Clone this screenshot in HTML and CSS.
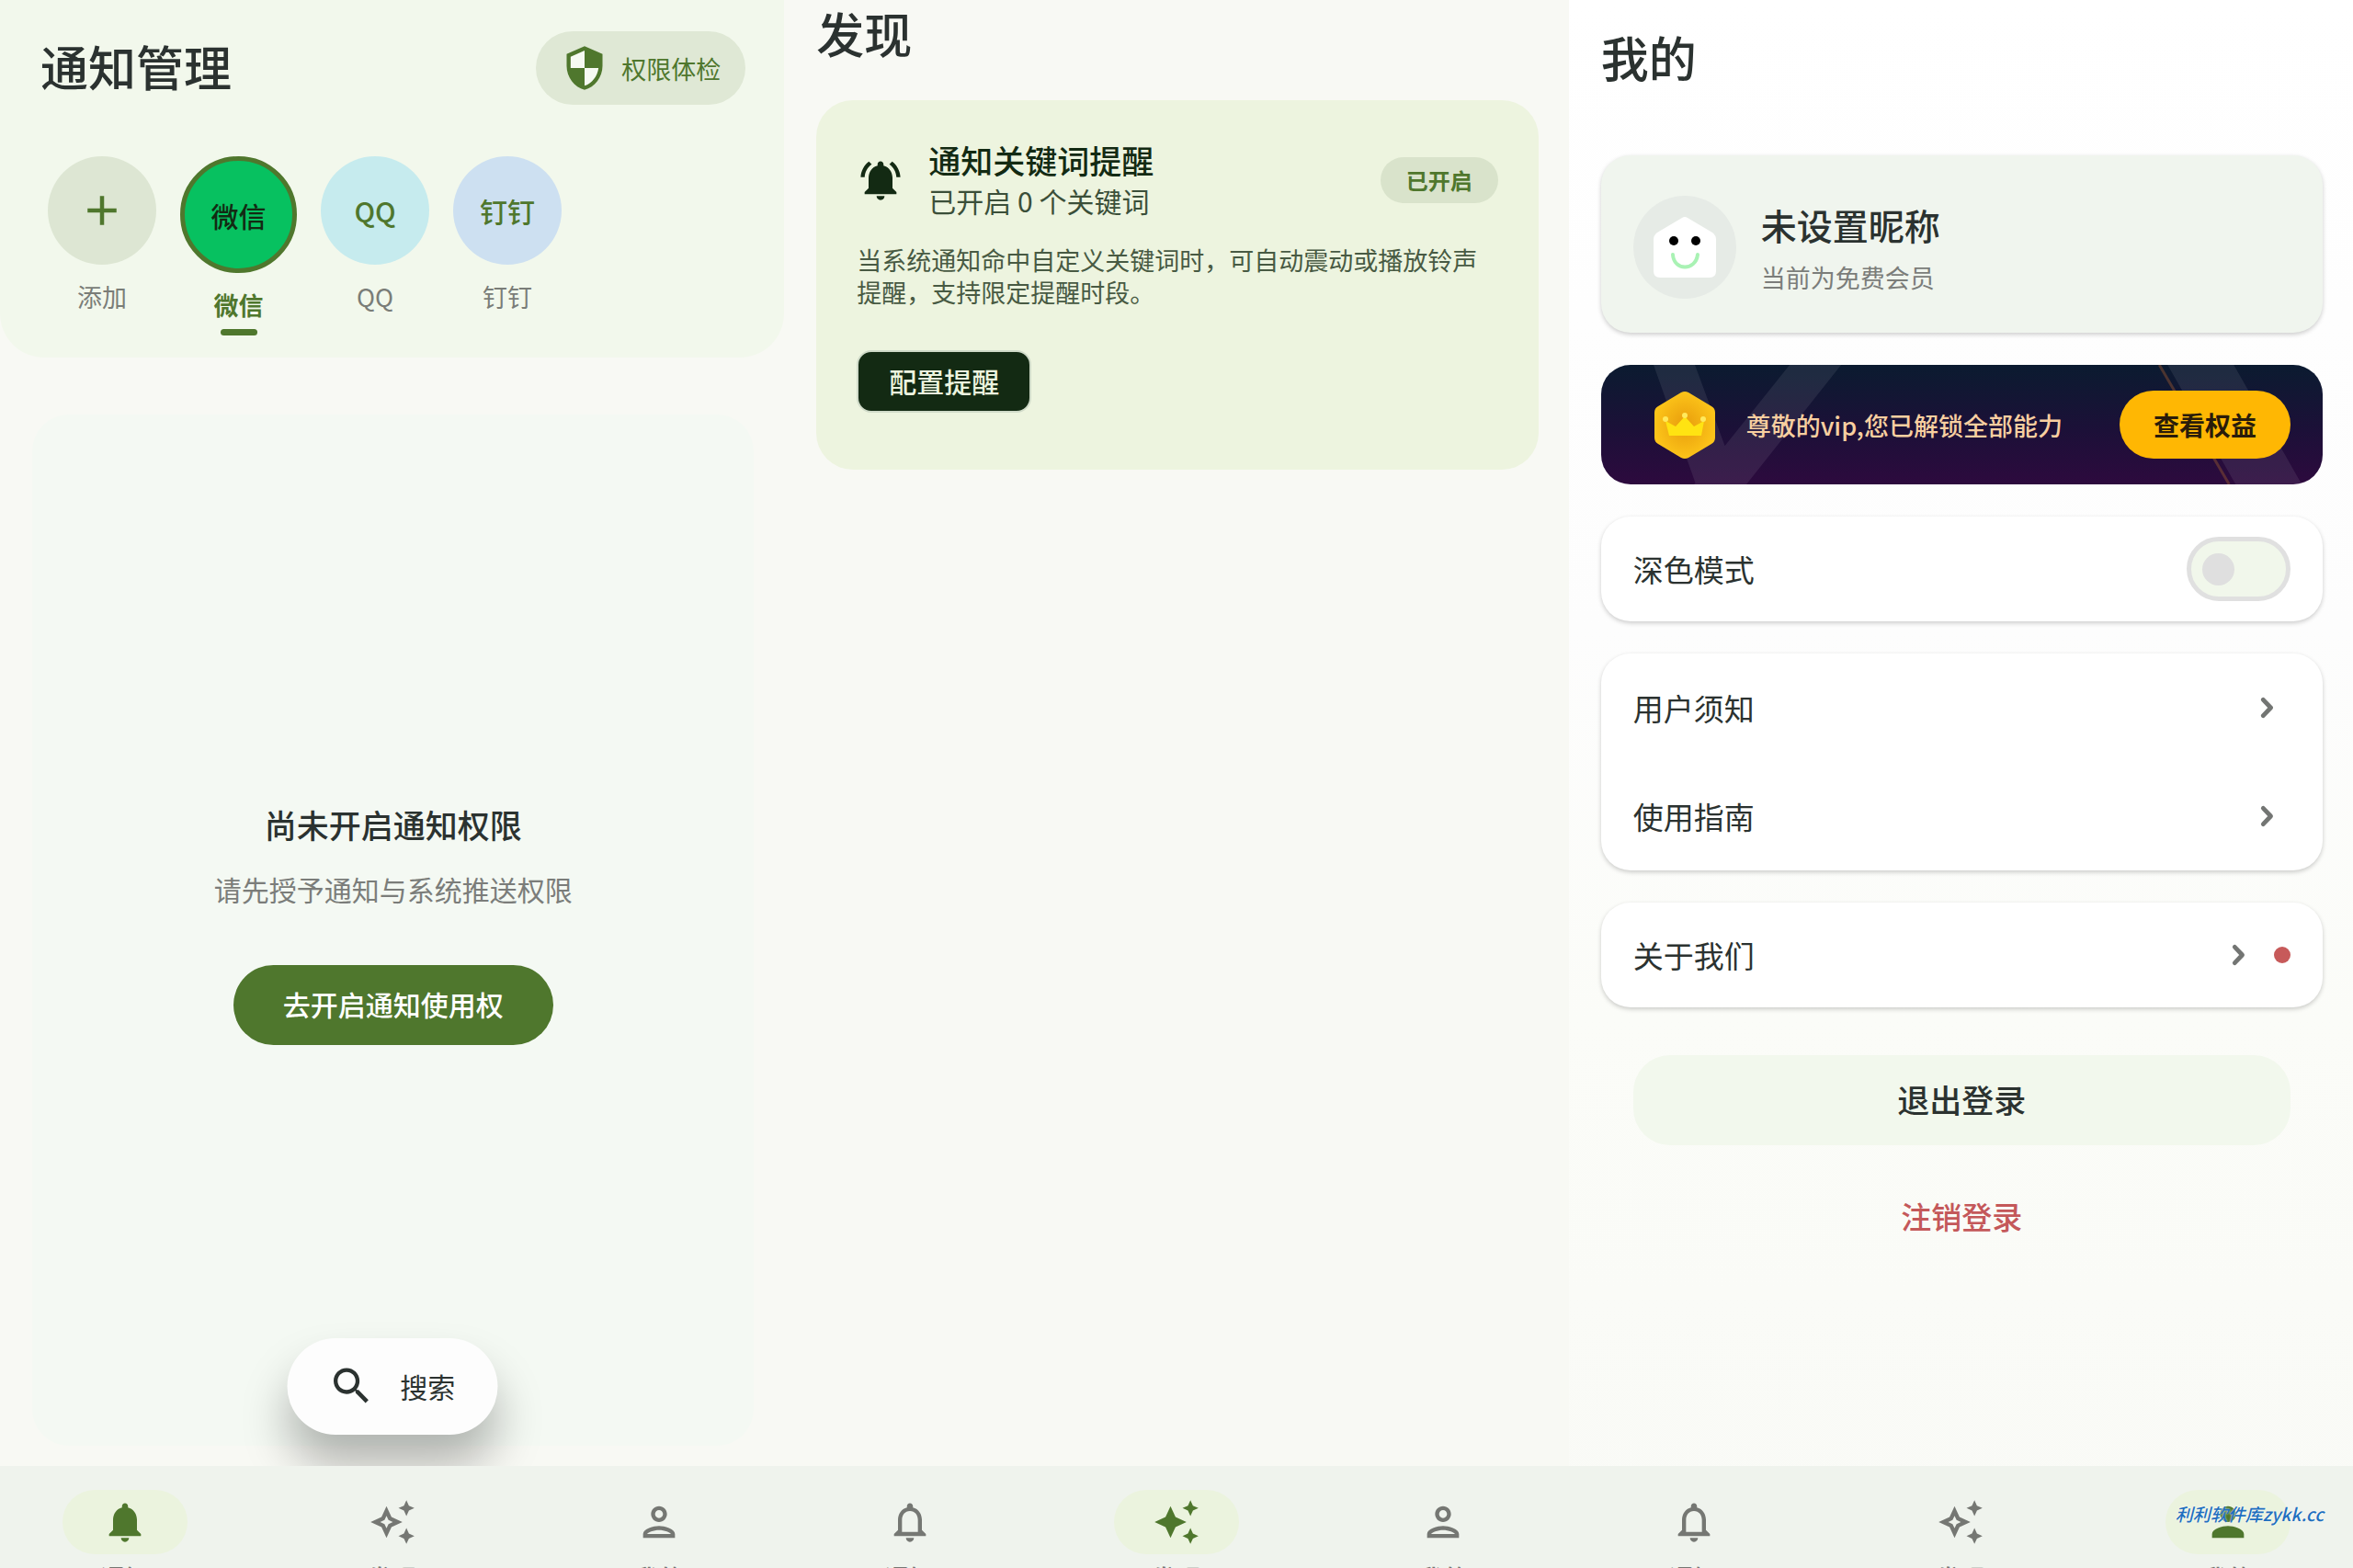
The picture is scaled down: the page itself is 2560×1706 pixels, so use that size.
FILE: index.html
```html
<!DOCTYPE html>
<html lang="zh-CN">
<head>
    <meta charset="UTF-8">
    <meta name="viewport" content="width=device-width, initial-scale=1.0">
    <title>通知管理</title>
    <link rel="stylesheet" href="styles.css">
</head>
<body>
    <!-- shared icons -->
    <svg class="sprite" aria-hidden="true">
        <symbol id="bell" viewBox="0 0 24 24">
            <path d="M12 22c1.1 0 2-.9 2-2h-4c0 1.1.89 2 2 2zm6-6v-5c0-3.07-1.64-5.64-4.5-6.32V4c0-.83-.67-1.5-1.5-1.5s-1.5.67-1.5 1.5v.68C7.63 5.36 6 7.92 6 11v5l-2 2v1h16v-1l-2-2z"/>
        </symbol>
        <symbol id="bell-outline" viewBox="0 0 24 24">
            <path d="M12 22c1.1 0 2-.9 2-2h-4c0 1.1.9 2 2 2zm6-6v-5c0-3.07-1.63-5.64-4.5-6.32V4c0-.83-.67-1.5-1.5-1.5s-1.5.67-1.5 1.5v.68C7.64 5.36 6 7.92 6 11v5l-2 2v1h16v-1l-2-2zm-2 1H8v-6c0-2.48 1.51-4.5 4-4.5s4 2.02 4 4.5v6z"/>
        </symbol>
        <symbol id="sparkle" viewBox="0 0 24 24">
            <path d="M19 9l1.25-2.75L23 5l-2.75-1.25L19 1l-1.25 2.75L15 5l2.75 1.25L19 9zM19 15l-1.25 2.75L15 19l2.75 1.25L19 23l1.25-2.75L23 19l-2.75-1.25L19 15zM11.5 9.5L9 4 6.5 9.5 1 12l5.5 2.5L9 20l2.5-5.5L17 12l-5.5-2.5z"/>
        </symbol>
        <symbol id="sparkle-outline" viewBox="0 0 24 24">
            <path d="M19 9l1.25-2.75L23 5l-2.75-1.25L19 1l-1.25 2.75L15 5l2.75 1.25L19 9zM19 15l-1.25 2.75L15 19l2.75 1.25L19 23l1.25-2.75L23 19l-2.75-1.25L19 15zM11.5 9.5L9 4 6.5 9.5 1 12l5.5 2.5L9 20l2.5-5.5L17 12l-5.5-2.5zm-1.51 3.49L9 15.17l-.99-2.18L5.83 12l2.18-.99L9 8.83l.99 2.18 2.18.99-2.18.99z"/>
        </symbol>
        <symbol id="person" viewBox="0 0 24 24">
            <path d="M12 12c2.21 0 4-1.79 4-4s-1.79-4-4-4-4 1.79-4 4 1.79 4 4 4zm0 2c-2.67 0-8 1.34-8 4v2h16v-2c0-2.66-5.33-4-8-4z"/>
        </symbol>
        <symbol id="person-outline" viewBox="0 0 24 24">
            <path d="M12 6c1.1 0 2 .9 2 2s-.9 2-2 2-2-.9-2-2 .9-2 2-2m0 10c2.7 0 5.8 1.29 6 2H6c.23-.72 3.31-2 6-2m0-12C9.79 4 8 5.79 8 8s1.79 4 4 4 4-1.79 4-4-1.79-4-4-4zm0 10c-2.67 0-8 1.34-8 4v2h16v-2c0-2.66-5.33-4-8-4z"/>
        </symbol>
        <symbol id="chevron" viewBox="0 0 24 24">
            <path d="M10.3 8l3.8 4-3.8 4" fill="none" stroke="currentColor" stroke-width="2.2" stroke-linecap="round" stroke-linejoin="round"/>
        </symbol>
    </svg>

    <div class="screens">
        <!-- notifications -->
        <section class="screen">
            <header class="top">
                <div class="top-row">
                    <h1>通知管理</h1>
                    <button class="check-btn">
                        <svg class="icon" viewBox="0 0 24 24"><path class="shield-back" d="M12 2L4 5.600v5.400c0 5 3.400 9.800 8 11 4.600-1.200 8-6 8-11V5.600z"/><path d="M12 1L3 5v6c0 5.550 3.840 10.740 9 12 5.160-1.260 9-6.450 9-12V5l-9-4zm0 10.990h7c-.53 4.120-3.280 7.790-7 8.940V12H5V6.300l7-3.110v8.800z"/></svg>
                        权限体检
                    </button>
                </div>
                <div class="apps">
                    <button class="app">
                        <span class="app-circle add"><svg class="icon" viewBox="0 0 24 24"><path d="M19 13h-6v6h-2v-6H5v-2h6V5h2v6h6v2z"/></svg></span>
                        <span class="app-name">添加</span>
                    </button>
                    <button class="app selected">
                        <span class="app-circle wechat">微信</span>
                        <span class="app-name">微信</span>
                    </button>
                    <button class="app">
                        <span class="app-circle qq">QQ</span>
                        <span class="app-name">QQ</span>
                    </button>
                    <button class="app">
                        <span class="app-circle ding">钉钉</span>
                        <span class="app-name">钉钉</span>
                    </button>
                </div>
            </header>
            <main class="empty">
                <h2>尚未开启通知权限</h2>
                <p>请先授予通知与系统推送权限</p>
                <button class="primary-btn">去开启通知使用权</button>
            </main>
            <button class="search-btn">
                <svg class="icon" viewBox="0 0 24 24"><path d="M15.500 14h-.79l-.28-.27C15.410 12.590 16 11.110 16 9.500 16 5.910 13.090 3 9.500 3S3 5.910 3 9.500 5.910 16 9.500 16c1.610 0 3.090-.59 4.230-1.570l.27.28v.79l5 4.990L20.490 19l-4.990-5zm-6 0C7.010 14 5 11.990 5 9.500S7.010 5 9.500 5 14 7.010 14 9.500 11.990 14 9.500 14z"/></svg>
                搜索
            </button>
            <nav class="tabbar">
                <a href="#notice" class="tab active"><span class="pill"><svg class="tab-icon"><use href="#bell"/></svg></span>通知</a>
                <a href="#discover" class="tab"><span class="pill"><svg class="tab-icon"><use href="#sparkle-outline"/></svg></span>发现</a>
                <a href="#mine" class="tab"><span class="pill"><svg class="tab-icon"><use href="#person-outline"/></svg></span>我的</a>
            </nav>
        </section>

        <!-- discover -->
        <section class="screen discover">
            <h1>发现</h1>
            <main class="body">
                <article class="feature">
                    <div class="feature-head">
                        <svg class="icon" viewBox="0 0 24 24"><path d="M7.580 4.080L6.150 2.650C3.750 4.480 2.170 7.300 2.030 10.500h2c.15-2.650 1.510-4.970 3.550-6.420zm12.390 6.420h2c-.15-3.200-1.730-6.020-4.120-7.850l-1.420 1.430c2.020 1.450 3.390 3.770 3.540 6.420zM18 11c0-3.070-1.640-5.640-4.500-6.320V4c0-.83-.67-1.500-1.500-1.500s-1.500.67-1.500 1.500v.68C7.630 5.360 6 7.920 6 11v5l-2 2v1h16v-1l-2-2v-5zm-6 11c.14 0 .27-.01.4-.04.65-.14 1.180-.58 1.440-1.180.1-.24.15-.5.15-.78h-4c.01 1.100.9 2 2.010 2z"/></svg>
                        <div class="feature-title">
                            <h2>通知关键词提醒</h2>
                            <p>已开启 0 个关键词</p>
                        </div>
                        <span class="badge">已开启</span>
                    </div>
                    <p class="feature-text">当系统通知命中自定义关键词时，可自动震动或播放铃声提醒，支持限定提醒时段。</p>
                    <button class="config-btn">配置提醒</button>
                </article>
            </main>
            <nav class="tabbar">
                <a href="#notice" class="tab"><span class="pill"><svg class="tab-icon"><use href="#bell-outline"/></svg></span>通知</a>
                <a href="#discover" class="tab active"><span class="pill"><svg class="tab-icon"><use href="#sparkle"/></svg></span>发现</a>
                <a href="#mine" class="tab"><span class="pill"><svg class="tab-icon"><use href="#person-outline"/></svg></span>我的</a>
            </nav>
        </section>

        <!-- mine -->
        <section class="screen mine">
            <h1>我的</h1>
            <main class="body">
                <div class="card profile">
                    <svg class="avatar" viewBox="0 0 112 112">
                        <circle cx="56" cy="56" r="56" fill="#e6ebe6"/>
                        <path d="M53 24q3-2 6 0l27 16q4 3 4 7v35q0 7-7 7H29q-7 0-7-7V47q0-4 4-7z" fill="#fff"/>
                        <circle cx="44" cy="49" r="5" fill="#000"/>
                        <circle cx="68" cy="49" r="5" fill="#000"/>
                        <path d="M43 64c1 18 25 18 27 0" fill="none" stroke="#a9f2b4" stroke-width="4" stroke-linecap="round"/>
                    </svg>
                    <div>
                        <h2>未设置昵称</h2>
                        <p>当前为免费会员</p>
                    </div>
                </div>

                <div class="vip">
                    <svg class="vip-beams" viewBox="0 0 785 130" preserveAspectRatio="none">
                        <path d="M57 0h45l48 130h-47zM205 0h56L158 130h-57zM616 0h72l74 130h-72z" fill="#fff" fill-opacity=".08"/>
                        <path d="M607 0l76 130" stroke="#8a5030" stroke-opacity=".5" stroke-width="3"/>
                    </svg>
                    <svg class="crown" viewBox="0 0 66 73">
                        <defs>
                            <radialGradient id="gold"><stop offset="0" stop-color="#e89c0c"/><stop offset="1" stop-color="#fcc419"/></radialGradient>
                        </defs>
                        <path d="M29 1q4-2 8 0l25 15q4 2 4 7v27q0 5-4 7L37 72q-4 2-8 0L4 57q-4-2-4-7V23q0-5 4-7z" fill="url(#gold)"/>
                        <path d="M12 32l4 16h35l3-16-11 6-10-11-10 11z" fill="#ffe312"/>
                        <g fill="#ffe95c"><circle cx="12" cy="30" r="3"/><circle cx="33" cy="26" r="3"/><circle cx="53" cy="30" r="3"/></g>
                    </svg>
                    <span class="vip-text">尊敬的vip,您已解锁全部能力</span>
                    <button class="vip-btn">查看权益</button>
                </div>

                <div class="card">
                    <div class="row">
                        <label for="dark">深色模式</label>
                        <input type="checkbox" id="dark" class="switch">
                    </div>
                </div>

                <div class="card">
                    <a href="#notes" class="row">用户须知<svg class="icon"><use href="#chevron"/></svg></a>
                    <a href="#guide" class="row">使用指南<svg class="icon"><use href="#chevron"/></svg></a>
                </div>

                <div class="card">
                    <a href="#about" class="row">关于我们<span class="row-end"><svg class="icon"><use href="#chevron"/></svg><i class="dot"></i></span></a>
                </div>

                <div class="account">
                    <button class="logout-btn">退出登录</button>
                    <button class="delete-btn">注销登录</button>
                </div>
            </main>
            <nav class="tabbar">
                <a href="#notice" class="tab"><span class="pill"><svg class="tab-icon"><use href="#bell-outline"/></svg></span>通知</a>
                <a href="#discover" class="tab"><span class="pill"><svg class="tab-icon"><use href="#sparkle-outline"/></svg></span>发现</a>
                <a href="#mine" class="tab active"><span class="pill"><svg class="tab-icon"><use href="#person"/></svg></span>我的</a>
            </nav>
            <span class="watermark">利利软件库zykk.cc</span>
        </section>
    </div>
</body>
</html>
```
FILE: styles.css
```css
* {
    margin: 0;
    padding: 0;
    box-sizing: border-box;
}

body {
    font-family: 'Noto Sans CJK SC', 'Noto Sans', sans-serif;
    font-size: 27px;
    background-color: #f8f9f4;
    color: #2b3230;
}

button {
    border: none;
    background: none;
    font: inherit;
    color: inherit;
    cursor: pointer;
}

a {
    color: inherit;
    text-decoration: none;
}

h1 {
    padding-bottom: 4px;
    font-size: 52px;
    font-weight: 500;
    line-height: 72px;
}

h2 {
    font-weight: 500;
}

.sprite {
    display: none;
}

.icon {
    width: 52px;
    height: 52px;
    flex: none;
    fill: currentColor;
}

.screens {
    display: grid;
    grid-template-columns: repeat(3, 1fr);
    height: 100vh;
    overflow: hidden;
}

.screen {
    position: relative;
    display: flex;
    flex-direction: column;
    min-height: 0;
}

.body {
    flex: 1;
    padding: 0 33px 0 35px;
}

/* notifications */
.top {
    padding: 34px 42px 24px 44px;
    background-color: #f2f8ec;
    border-radius: 0 0 48px 48px;
}

.top-row {
    display: flex;
    justify-content: space-between;
    align-items: center;
}

.check-btn {
    display: flex;
    align-items: center;
    gap: 14px;
    height: 80px;
    padding: 0 27px;
    border-radius: 40px;
    background-color: #dfe8d5;
    color: #4f772d;
}

.shield-back {
    fill: #f6faf2;
}

.apps {
    display: flex;
    align-items: flex-start;
    gap: 26px;
    margin-top: 56px;
    padding-left: 8px;
}

.app {
    display: flex;
    flex-direction: column;
    align-items: center;
    color: #7a7d78;
}

.app-circle {
    display: flex;
    align-items: center;
    justify-content: center;
    width: 118px;
    height: 118px;
    border-radius: 50%;
    font-size: 30px;
    font-weight: 500;
    color: #4f772d;
}

.app-circle .icon {
    width: 54px;
    height: 54px;
}

.app-circle.add {
    background-color: #dde6d3;
}

.app-circle.qq {
    background-color: #c6ebee;
}

.app-circle.ding {
    background-color: #cde0f1;
}

.app-circle.wechat {
    width: 127px;
    height: 127px;
    border: 5px solid #4f772d;
    background-color: #07c160;
    color: #132a13;
}

.app-name {
    margin-top: 17px;
    line-height: 36px;
}

.selected .app-name {
    color: #4f772d;
    font-weight: 700;
}

.selected::after {
    content: '';
    width: 40px;
    height: 7px;
    margin-top: 8px;
    border-radius: 4px;
    background-color: #4f772d;
}

.empty {
    flex: 1;
    display: flex;
    flex-direction: column;
    align-items: center;
    justify-content: center;
    margin: 62px 33px 22px 35px;
    padding-bottom: 14px;
    border-radius: 40px;
    background-color: #f4f9f3;
}

.empty h2 {
    font-size: 35px;
    line-height: 46px;
}

.empty p {
    margin-top: 24px;
    font-size: 30px;
    line-height: 46px;
    color: #7b7d7a;
}

.primary-btn {
    height: 87px;
    margin-top: 60px;
    padding: 0 54px 2px;
    border-radius: 44px;
    background-color: #4f772d;
    color: #fff;
    font-size: 30px;
    font-weight: 500;
}

/* floats over the list, under the tab bar */
.search-btn {
    position: absolute;
    left: 50%;
    bottom: 145px;
    transform: translateX(-50%);
    display: flex;
    align-items: center;
    gap: 27px;
    height: 105px;
    padding: 0 46px 2px 44px;
    border-radius: 53px;
    background-color: #fdfdfd;
    box-shadow: 0 34px 50px rgba(0, 0, 0, 0.28);
    font-size: 30px;
    white-space: nowrap;
}

/* discover */
.discover .feature {
    margin-top: 33px;
    padding: 42px 44px 62px;
    border-radius: 40px;
    background-color: #edf4df;
    color: #132a13;
}

.discover h1 {
    padding-left: 35px;
}

.feature-head {
    display: flex;
    align-items: center;
}

.feature-title {
    flex: 1;
    margin-left: 26px;
    line-height: 45px;
}

.feature-title h2 {
    font-size: 35px;
}

.feature-title p {
    font-size: 30px;
    color: #3b4f39;
}

.badge {
    padding: 0 28px;
    border-radius: 25px;
    background-color: #d9e3cb;
    color: #4f772d;
    font-size: 24px;
    font-weight: 700;
    line-height: 50px;
}

.feature-text {
    margin-top: 24px;
    line-height: 35px;
    color: #485a43;
}

.config-btn {
    height: 68px;
    margin-top: 46px;
    padding: 0 33px 2px;
    border: 2px solid #cfdac8;
    border-radius: 16px;
    background-color: #132a13;
    color: #ecf4df;
    font-size: 30px;
    font-weight: 500;
}

/* mine */
.mine {
    background: linear-gradient(#fff, #fdfdfd 40%, #fbfcf8 65%, #f9faf6);
}

.mine h1 {
    padding: 26px 35px 4px;
}

.mine .body {
    display: flex;
    flex-direction: column;
    gap: 35px;
    padding-top: 67px;
}

.card {
    border-radius: 32px;
    background-color: #fff;
    box-shadow: 0 2px 5px rgba(0, 0, 0, 0.2);
}

.profile {
    display: flex;
    align-items: center;
    gap: 27px;
    padding: 44px 35px 37px;
    background-color: #f0f5ee;
}

.avatar {
    width: 112px;
    height: 112px;
}

.profile h2 {
    font-size: 39px;
    line-height: 56px;
}

.profile p {
    margin-top: 10px;
    line-height: 40px;
    color: #7b7d7a;
}

.vip {
    position: relative;
    display: flex;
    align-items: center;
    height: 130px;
    padding: 0 35px 0 58px;
    border-radius: 32px;
    background: linear-gradient(#0b1b30, #1c1038 55%, #2d0a3e);
    overflow: hidden;
}

.vip-beams {
    position: absolute;
    inset: 0;
    width: 100%;
    height: 100%;
}

.crown {
    position: relative;
    width: 66px;
    height: 73px;
}

.vip-text {
    position: relative;
    flex: 1;
    margin-left: 34px;
    color: #f8cfa0;
    font-weight: 500;
}

.vip-btn {
    position: relative;
    height: 74px;
    padding: 0 37px;
    border-radius: 37px;
    background-color: #ffb703;
    color: #2a1c0a;
    font-size: 28px;
    font-weight: 700;
}

.row {
    display: flex;
    align-items: center;
    justify-content: space-between;
    height: 118px;
    padding: 0 35px;
    font-size: 33px;
}

.row:only-child {
    height: 114px;
}

.row .icon {
    color: #737573;
}

.row-end {
    display: flex;
    align-items: center;
    gap: 13px;
}

.dot {
    width: 18px;
    height: 18px;
    border-radius: 50%;
    background-color: #c75a5a;
}

.switch {
    appearance: none;
    display: flex;
    align-items: center;
    width: 113px;
    height: 70px;
    padding-left: 12px;
    border: 5px solid #e0e0e0;
    border-radius: 35px;
    background-color: #f1f7eb;
}

.switch::before {
    content: '';
    width: 35px;
    height: 35px;
    border-radius: 50%;
    background-color: #dfdfdf;
}

.switch:checked {
    justify-content: flex-end;
    padding: 0 12px;
}

.account {
    display: flex;
    flex-direction: column;
    gap: 44px;
    padding: 17px 35px 0;
}

.logout-btn {
    height: 98px;
    padding-bottom: 4px;
    border-radius: 40px;
    background-color: #f2f8ed;
    font-size: 35px;
    font-weight: 500;
}

.delete-btn {
    height: 70px;
    padding-bottom: 4px;
    color: #c4585a;
    font-size: 33px;
    font-weight: 500;
}

/* bottom bar */
.tabbar {
    position: relative;
    flex: none;
    display: flex;
    gap: 18px;
    height: 111px;
    padding-top: 26px;
    background-color: #eff3ed;
    overflow: hidden;
}

.tab {
    flex: 1;
    display: flex;
    flex-direction: column;
    align-items: center;
    gap: 8px;
    line-height: 36px;
    font-weight: 500;
    color: #757773;
}

.pill {
    display: flex;
    align-items: center;
    justify-content: center;
    flex: none;
    width: 136px;
    height: 70px;
    border-radius: 35px;
}

.active .pill {
    background-color: #ebf3de;
    color: #4f772d;
}

.tab-icon {
    width: 52px;
    height: 52px;
    fill: currentColor;
}

.watermark {
    position: absolute;
    right: 32px;
    bottom: 45px;
    color: #1f6fbf;
    font-size: 19px;
    font-style: italic;
    font-weight: 500;
    line-height: 28px;
    text-shadow: 0 0 2px #fff;
}
```
